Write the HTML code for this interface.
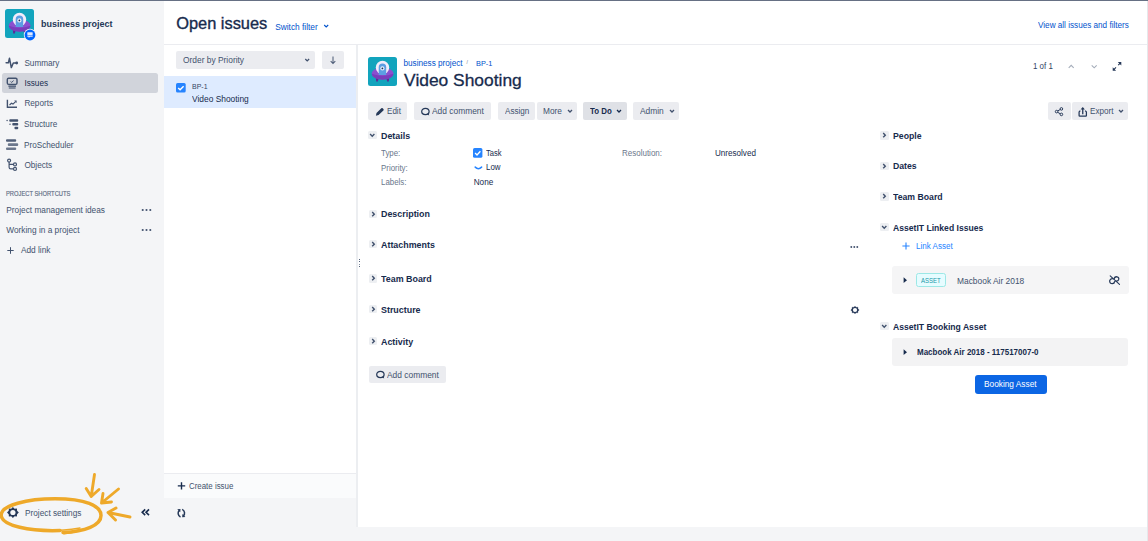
<!DOCTYPE html>
<html><head><meta charset="utf-8"><title>Open issues</title>
<style>
*{margin:0;padding:0;box-sizing:border-box}
html,body{width:1148px;height:541px;overflow:hidden;background:#f4f5f7;font-family:"Liberation Sans",sans-serif}
.t{position:absolute;white-space:nowrap;line-height:0}
.b{position:absolute}
.s{position:absolute;overflow:visible}
</style></head><body>
<div class="b" style="left:0.00px;top:0.00px;width:1148.00px;height:541.00px;background:#f4f5f7;"></div>
<div class="b" style="left:164.00px;top:1.00px;width:983.00px;height:526.00px;background:#ffffff;"></div>
<div class="b" style="left:0.00px;top:0.00px;width:1148.00px;height:1.00px;background:#667084;"></div>
<div class="b" style="left:1147.00px;top:1.00px;width:1.00px;height:540.00px;background:#e6e8eb;"></div>
<div class="b" style="left:164.00px;top:44.00px;width:983.00px;height:1.00px;background:#ebecf0;"></div>
<div class="b" style="left:356.00px;top:45.00px;width:1.70px;height:482.00px;background:#eceef1;"></div>
<svg class="s" style="left:5.00px;top:9.40px" width="29" height="29" viewBox="0 0 29 29">
<rect x="0" y="0" width="29" height="29" rx="2.5" fill="#12a4bd"/>
<path d="M7.8 20.5 L8.2 24.6 L9.9 24.6 L10.6 21 Z M18.4 21 L19.1 24.6 L20.8 24.6 L21.2 20.5 Z" fill="#5a2d98"/>
<ellipse cx="14.6" cy="16.6" rx="10.9" ry="6.0" fill="#8b4fcf"/>
<circle cx="14.5" cy="10.4" r="6.7" fill="#f2ecfb"/>
<path d="M10.7 18 L10.7 10.3 A3.75 3.75 0 0 1 18.2 10.3 L18.2 18 Z" fill="#5c9ee3"/>
<path d="M3.7 16.8 Q14.6 20.6 25.5 16.8 A10.9 6 0 0 1 3.7 16.8 Z" fill="#7a3dbb"/>
<circle cx="14.4" cy="11.4" r="2.1" fill="#e8f0fb"/>
<circle cx="14.4" cy="11.4" r="0.9" fill="#1c2d5a"/>
</svg>
<svg class="s" style="left:24.00px;top:29.40px" width="13" height="13" viewBox="0 0 13 13">
<circle cx="6" cy="6" r="6.2" fill="#f4f5f7"/>
<circle cx="6" cy="6" r="5.4" fill="#0065ff"/>
<rect x="3.3" y="3.3" width="5.4" height="2.6" rx="0.4" fill="#dfe9ff"/>
<path d="M3.3 6.6 H8.7 V7.7 H6.3 L4.6 8.8 V7.7 H3.3 Z" fill="#dfe9ff"/>
</svg>
<div class="t" style="left:41.00px;top:23.80px;font-size:9.72px;color:#253858;font-weight:bold;transform:scaleX(0.926);transform-origin:0 0;">business project</div>
<div class="b" style="left:2.00px;top:73.00px;width:156.00px;height:20.40px;background:#d1d4db;border-radius:2.5px;"></div>
<svg class="s" style="left:5.00px;top:56.00px" width="14" height="14" viewBox="0 0 14 14"><path d="M1.1 6.8 H3.4 L4.5 2.3 L6.3 11.6 L8.3 7 H11" fill="none" stroke="#42526e" stroke-width="1.5" stroke-linejoin="round" stroke-linecap="round"/><circle cx="11.7" cy="7" r="1.4" fill="#42526e"/></svg>
<svg class="s" style="left:5.00px;top:76.00px" width="14" height="14" viewBox="0 0 14 14"><rect x="2.3" y="2.2" width="9.7" height="6.2" rx="1.3" fill="none" stroke="#42526e" stroke-width="1.4"/><path d="M5.6 5.6 L6.7 6.4 L8.6 4.6" fill="none" stroke="#42526e" stroke-width="1"/><rect x="3.4" y="9.5" width="7.6" height="1.3" fill="#42526e"/><rect x="3.8" y="11.3" width="6.8" height="1.4" fill="#5e6c84"/></svg>
<svg class="s" style="left:5.00px;top:97.00px" width="14" height="14" viewBox="0 0 14 14"><path d="M2.4 2.8 V10.2 H12" fill="none" stroke="#42526e" stroke-width="1.4"/><path d="M4.5 8 L6.5 6.3 L8 7.1 L10.6 4.6" fill="none" stroke="#42526e" stroke-width="1.2"/><path d="M9.2 3.6 L11.6 3.6 L11.6 6 Z" fill="#42526e"/></svg>
<svg class="s" style="left:5.00px;top:117.00px" width="14" height="14" viewBox="0 0 14 14"><rect x="4.3" y="2.3" width="8.9" height="2.5" rx="0.8" fill="#42526e"/><rect x="7.3" y="6" width="5.9" height="2.5" rx="0.8" fill="#42526e"/><rect x="9.5" y="9.7" width="3.7" height="2.5" rx="0.8" fill="#42526e"/><circle cx="2.1" cy="3.5" r="0.7" fill="#42526e"/><circle cx="5" cy="7.2" r="0.7" fill="#42526e"/></svg>
<svg class="s" style="left:5.00px;top:138.00px" width="14" height="14" viewBox="0 0 14 14"><rect x="1" y="1.2" width="10.2" height="2.6" rx="1" fill="#505f79"/><rect x="2.8" y="5.3" width="10.4" height="2.7" rx="1" fill="#6b778c"/><rect x="1" y="9.5" width="10.2" height="2.6" rx="1" fill="#6b778c"/></svg>
<svg class="s" style="left:5.00px;top:158.00px" width="14" height="14" viewBox="0 0 14 14"><circle cx="4.1" cy="2.6" r="1.5" fill="none" stroke="#42526e" stroke-width="1.2"/><path d="M4.1 4.1 V9.2 Q4.1 10.9 5.8 10.9 H8.5 M4.1 6.4 H8.5" fill="none" stroke="#42526e" stroke-width="1.2"/><circle cx="10" cy="6.4" r="1.5" fill="none" stroke="#42526e" stroke-width="1.2"/><circle cx="10" cy="10.9" r="1.5" fill="none" stroke="#42526e" stroke-width="1.2"/></svg>
<div class="t" style="left:24.40px;top:63.63px;font-size:8.20px;color:#42526e;">Summary</div>
<div class="t" style="left:24.40px;top:83.63px;font-size:8.20px;color:#172b4d;">Issues</div>
<div class="t" style="left:24.40px;top:103.93px;font-size:8.20px;color:#42526e;">Reports</div>
<div class="t" style="left:24.40px;top:123.96px;font-size:8.69px;color:#42526e;transform:scaleX(0.943);transform-origin:0 0;">Structure</div>
<div class="t" style="left:24.40px;top:144.66px;font-size:8.69px;color:#42526e;transform:scaleX(0.943);transform-origin:0 0;">ProScheduler</div>
<div class="t" style="left:24.40px;top:166.03px;font-size:8.20px;color:#42526e;">Objects</div>
<div class="t" style="left:6.30px;top:194.26px;font-size:6.40px;color:#5e6c84;transform:scaleX(0.905);transform-origin:0 0;-webkit-text-stroke:0.15px #5e6c84;">PROJECT SHORTCUTS</div>
<div class="t" style="left:6.30px;top:209.69px;font-size:8.30px;color:#42526e;">Project management ideas</div>
<div class="t" style="left:6.30px;top:230.00px;font-size:8.30px;color:#42526e;">Working in a project</div>
<div class="t" style="left:20.90px;top:250.19px;font-size:8.30px;color:#42526e;">Add link</div>
<svg class="s" style="left:6.00px;top:246.00px" width="9" height="9" viewBox="0 0 9 9"><path d="M4.5 1.2 V7.8 M1.3 4.5 H7.7" stroke="#42526e" stroke-width="1"/></svg>
<svg class="s" style="left:141.00px;top:207.70px" width="12" height="4" viewBox="0 0 12 4"><circle cx="1.7" cy="2" r="1.05" fill="#42526e"/><circle cx="5.5" cy="2" r="1.05" fill="#42526e"/><circle cx="9.3" cy="2" r="1.05" fill="#42526e"/></svg>
<svg class="s" style="left:141.00px;top:228.30px" width="12" height="4" viewBox="0 0 12 4"><circle cx="1.7" cy="2" r="1.05" fill="#42526e"/><circle cx="5.5" cy="2" r="1.05" fill="#42526e"/><circle cx="9.3" cy="2" r="1.05" fill="#42526e"/></svg>
<svg class="s" style="left:6.00px;top:506.00px" width="14" height="14" viewBox="0 0 14 14"><path d="M6.9 0.8 L8.6 2.4 L10.9 2.2 L11.1 4.5 L12.8 6.2 L11.1 7.9 L10.9 10.2 L8.6 10 L6.9 11.6 L5.2 10 L2.9 10.2 L2.7 7.9 L1 6.2 L2.7 4.5 L2.9 2.2 L5.2 2.4 Z" transform="translate(0,0.3)" fill="#253858"/><circle cx="6.9" cy="6.5" r="2.6" fill="#f4f5f7"/></svg>
<div class="t" style="left:25.00px;top:513.38px;font-size:8.91px;color:#42526e;transform:scaleX(0.926);transform-origin:0 0;">Project settings</div>
<svg class="s" style="left:139.00px;top:506.00px" width="14" height="12" viewBox="0 0 14 12"><path d="M6.2 3.4 L3.2 6.3 L6.2 9.2 M10 3.4 L7 6.3 L10 9.2" fill="none" stroke="#172b4d" stroke-width="1.6"/></svg>
<div class="t" style="left:176.20px;top:23.46px;font-size:16.40px;color:#172b4d;-webkit-text-stroke:0.35px #172b4d;">Open issues</div>
<div class="t" style="left:275.20px;top:26.68px;font-size:8.33px;color:#0052cc;">Switch filter</div>
<svg class="s" style="left:322.00px;top:22.00px" width="8" height="8" viewBox="0 0 8 8"><path d="M2.2 3 L4.2 5 L6.2 3" fill="none" stroke="#0052cc" stroke-width="1.1"/></svg>
<div class="t" style="left:1038.00px;top:24.72px;font-size:8.81px;color:#0052cc;transform:scaleX(0.926);transform-origin:0 0;">View all issues and filters</div>
<div class="b" style="left:176.00px;top:51.00px;width:139.00px;height:17.70px;background:#ebecf0;border-radius:2px;"></div>
<div class="t" style="left:182.90px;top:60.31px;font-size:8.82px;color:#42526e;transform:scaleX(0.952);transform-origin:0 0;">Order by Priority</div>
<svg class="s" style="left:302.00px;top:55.00px" width="10" height="10" viewBox="0 0 10 10"><path d="M3.3 4 L5.2 5.9 L7.1 4" fill="none" stroke="#42526e" stroke-width="1.3"/></svg>
<div class="b" style="left:322.00px;top:51.00px;width:22.00px;height:17.70px;background:#ebecf0;border-radius:2px;"></div>
<svg class="s" style="left:328.00px;top:54.00px" width="10" height="12" viewBox="0 0 10 12"><path d="M5 2.5 V9.6 M2.7 7.2 L5 9.6 L7.3 7.2" fill="none" stroke="#505f79" stroke-width="1.05"/></svg>
<div class="b" style="left:164.00px;top:76.00px;width:192.00px;height:32.00px;background:#deebff;"></div>
<svg class="s" style="left:176.00px;top:82.80px" width="10" height="10" viewBox="0 0 10 10"><rect x="0" y="0" width="9.7" height="9.6" rx="1.6" fill="#2684ff"/><path d="M2.2 4.9 L4.1 6.8 L7.6 3.2" fill="none" stroke="#fff" stroke-width="1.4"/></svg>
<div class="t" style="left:192.00px;top:86.86px;font-size:7.84px;color:#344563;transform:scaleX(0.893);transform-origin:0 0;">BP-1</div>
<div class="t" style="left:192.00px;top:98.93px;font-size:9.07px;color:#172b4d;transform:scaleX(0.926);transform-origin:0 0;">Video Shooting</div>
<div class="b" style="left:164.00px;top:472.50px;width:192.00px;height:1.50px;background:#ebecf0;"></div>
<div class="b" style="left:164.00px;top:474.00px;width:192.00px;height:23.50px;background:#fafbfc;"></div>
<div class="b" style="left:164.00px;top:497.50px;width:192.00px;height:43.50px;background:#f4f5f7;"></div>
<svg class="s" style="left:177.00px;top:481.00px" width="9" height="9" viewBox="0 0 9 9"><path d="M4.5 1.2 V8.5 M0.8 4.85 H8.2" stroke="#172b4d" stroke-width="1.4"/></svg>
<div class="t" style="left:188.80px;top:486.20px;font-size:8.85px;color:#42526e;transform:scaleX(0.893);transform-origin:0 0;">Create issue</div>
<svg class="s" style="left:176.00px;top:508.00px" width="11" height="10" viewBox="0 0 11 10"><g transform="translate(-0.55,-0.45) scale(1.12)"><path d="M3.5 2.5 A3.6 3.6 0 0 0 4.5 8.4 M7 7.5 A3.6 3.6 0 0 0 6 1.6" fill="none" stroke="#253858" stroke-width="1.35"/><path d="M1.6 1.6 L4.5 1.3 L4.3 4.2 Z M8.9 8.4 L6 8.7 L6.2 5.8 Z" fill="#253858"/></g></svg>
<div class="b" style="left:358.90px;top:258.80px;width:1.00px;height:1.00px;background:#505f79;"></div>
<div class="b" style="left:358.90px;top:261.10px;width:1.00px;height:1.00px;background:#505f79;"></div>
<div class="b" style="left:358.90px;top:263.60px;width:1.00px;height:1.00px;background:#8993a4;"></div>
<div class="b" style="left:358.90px;top:266.00px;width:1.00px;height:1.00px;background:#505f79;"></div>
<svg class="s" style="left:368.00px;top:57.00px" width="29" height="29" viewBox="0 0 29 29">
<rect x="0" y="0" width="29" height="29" rx="2.5" fill="#12a4bd"/>
<path d="M7.8 20.5 L8.2 24.6 L9.9 24.6 L10.6 21 Z M18.4 21 L19.1 24.6 L20.8 24.6 L21.2 20.5 Z" fill="#5a2d98"/>
<ellipse cx="14.6" cy="16.6" rx="10.9" ry="6.0" fill="#8b4fcf"/>
<circle cx="14.5" cy="10.4" r="6.7" fill="#f2ecfb"/>
<path d="M10.7 18 L10.7 10.3 A3.75 3.75 0 0 1 18.2 10.3 L18.2 18 Z" fill="#5c9ee3"/>
<path d="M3.7 16.8 Q14.6 20.6 25.5 16.8 A10.9 6 0 0 1 3.7 16.8 Z" fill="#7a3dbb"/>
<circle cx="14.4" cy="11.4" r="2.1" fill="#e8f0fb"/>
<circle cx="14.4" cy="11.4" r="0.9" fill="#1c2d5a"/>
</svg>
<div class="t" style="left:403.50px;top:63.63px;font-size:8.19px;color:#0052cc;">business project</div>
<div class="t" style="left:466.60px;top:62.25px;font-size:5.00px;color:#6b778c;">/</div>
<div class="t" style="left:475.50px;top:63.70px;font-size:7.99px;color:#0052cc;transform:scaleX(0.926);transform-origin:0 0;">BP-1</div>
<div class="t" style="left:404.10px;top:79.71px;font-size:17.40px;color:#172b4d;-webkit-text-stroke:0.3px #172b4d;">Video Shooting</div>
<div class="b" style="left:368.40px;top:102.00px;width:38.60px;height:17.80px;background:#ebecf0;border-radius:2px;"></div>
<svg class="s" style="left:375.00px;top:107.00px" width="10" height="10" viewBox="0 0 10 10"><path d="M0.9 8.7 L1.5 6.1 L6.3 1.3 Q7 0.6 7.7 1.3 L8.4 2 Q9.1 2.7 8.4 3.4 L3.6 8.1 Z" fill="#253858"/></svg>
<div class="t" style="left:387.10px;top:110.98px;font-size:8.63px;color:#42526e;transform:scaleX(0.935);transform-origin:0 0;">Edit</div>
<div class="b" style="left:413.70px;top:102.00px;width:77.30px;height:17.80px;background:#ebecf0;border-radius:2px;"></div>
<svg class="s" style="left:419.50px;top:107.00px" width="11" height="10" viewBox="0 0 11 10"><ellipse cx="5.4" cy="4.5" rx="3.7" ry="3.2" fill="none" stroke="#253858" stroke-width="1.2"/><path d="M6.9 7.3 L9.2 8.6 L8.5 6.3 Z" fill="#253858"/></svg>
<div class="t" style="left:432.40px;top:110.94px;font-size:8.74px;color:#42526e;transform:scaleX(0.962);transform-origin:0 0;">Add comment</div>
<div class="b" style="left:497.70px;top:102.00px;width:37.30px;height:17.80px;background:#ebecf0;border-radius:2px;"></div>
<div class="t" style="left:504.60px;top:110.99px;font-size:8.59px;color:#42526e;transform:scaleX(0.943);transform-origin:0 0;">Assign</div>
<div class="b" style="left:537.00px;top:102.00px;width:40.00px;height:17.80px;background:#ebecf0;border-radius:2px;"></div>
<div class="t" style="left:543.00px;top:110.95px;font-size:8.72px;color:#42526e;transform:scaleX(0.952);transform-origin:0 0;">More</div>
<div class="b" style="left:583.40px;top:102.00px;width:43.60px;height:17.80px;background:#dfe1e6;border-radius:2px;"></div>
<div class="t" style="left:590.20px;top:111.07px;font-size:8.37px;color:#172b4d;font-weight:bold;transform:scaleX(0.943);transform-origin:0 0;">To Do</div>
<div class="b" style="left:633.00px;top:102.00px;width:46.00px;height:17.80px;background:#ebecf0;border-radius:2px;"></div>
<div class="t" style="left:639.90px;top:110.91px;font-size:8.82px;color:#42526e;transform:scaleX(0.952);transform-origin:0 0;">Admin</div>
<svg class="s" style="left:565.90px;top:107.00px" width="8" height="8" viewBox="0 0 8 8"><path d="M2 3 L4 5 L6 3" fill="none" stroke="#42526e" stroke-width="1.3"/></svg>
<svg class="s" style="left:615.00px;top:107.00px" width="8" height="8" viewBox="0 0 8 8"><path d="M2 3 L4 5 L6 3" fill="none" stroke="#172b4d" stroke-width="1.3"/></svg>
<svg class="s" style="left:668.00px;top:107.00px" width="8" height="8" viewBox="0 0 8 8"><path d="M2 3 L4 5 L6 3" fill="none" stroke="#42526e" stroke-width="1.3"/></svg>
<div class="b" style="left:368.10px;top:130.90px;width:8.50px;height:8.30px;background:#edeff2;border-radius:1.5px;"></div>
<svg class="s" style="left:368.10px;top:130.90px" width="8.5" height="8.3" viewBox="0 0 8.5 8.3"><path d="M2.1 3.1 L4.25 5.2 L6.4 3.1" fill="none" stroke="#42526e" stroke-width="1.4"/></svg>
<div class="t" style="left:380.70px;top:135.94px;font-size:9.60px;color:#172b4d;font-weight:bold;transform:scaleX(0.927);transform-origin:0 0;">Details</div>
<div class="t" style="left:380.70px;top:152.61px;font-size:8.53px;color:#6b778c;transform:scaleX(0.926);transform-origin:0 0;">Type:</div>
<div class="t" style="left:380.70px;top:167.77px;font-size:8.37px;color:#6b778c;transform:scaleX(0.943);transform-origin:0 0;">Priority:</div>
<div class="t" style="left:380.70px;top:182.31px;font-size:8.53px;color:#6b778c;transform:scaleX(0.926);transform-origin:0 0;">Labels:</div>
<svg class="s" style="left:473.40px;top:148.00px" width="10" height="10" viewBox="0 0 10 10"><rect x="0" y="0" width="9.4" height="9.8" rx="1.6" fill="#2684ff"/><path d="M2.1 5 L4 6.9 L7.4 3.3" fill="none" stroke="#fff" stroke-width="1.4"/></svg>
<div class="t" style="left:486.00px;top:152.67px;font-size:8.36px;color:#172b4d;transform:scaleX(0.909);transform-origin:0 0;">Task</div>
<svg class="s" style="left:474.00px;top:165.00px" width="9" height="6" viewBox="0 0 9 6"><path d="M1.2 2.1 Q4.4 5.3 7.6 2.1" fill="none" stroke="#2684ff" stroke-width="1.5" stroke-linecap="round"/></svg>
<div class="t" style="left:486.00px;top:168.02px;font-size:8.22px;color:#172b4d;transform:scaleX(0.962);transform-origin:0 0;">Low</div>
<div class="t" style="left:473.70px;top:182.93px;font-size:8.20px;color:#172b4d;">None</div>
<div class="t" style="left:622.00px;top:152.79px;font-size:8.32px;color:#6b778c;transform:scaleX(0.962);transform-origin:0 0;">Resolution:</div>
<div class="t" style="left:714.80px;top:152.75px;font-size:8.42px;color:#172b4d;transform:scaleX(0.962);transform-origin:0 0;">Unresolved</div>
<div class="b" style="left:368.50px;top:209.60px;width:8.50px;height:8.30px;background:#edeff2;border-radius:1.5px;"></div>
<svg class="s" style="left:368.50px;top:209.60px" width="8.5" height="8.3" viewBox="0 0 8.5 8.3"><path d="M3.2 2 L5.3 4.15 L3.2 6.3" fill="none" stroke="#42526e" stroke-width="1.4"/></svg>
<div class="t" style="left:380.70px;top:214.24px;font-size:9.60px;color:#172b4d;font-weight:bold;transform:scaleX(0.927);transform-origin:0 0;">Description</div>
<div class="b" style="left:368.50px;top:240.10px;width:8.50px;height:8.30px;background:#edeff2;border-radius:1.5px;"></div>
<svg class="s" style="left:368.50px;top:240.10px" width="8.5" height="8.3" viewBox="0 0 8.5 8.3"><path d="M3.2 2 L5.3 4.15 L3.2 6.3" fill="none" stroke="#42526e" stroke-width="1.4"/></svg>
<div class="t" style="left:380.70px;top:245.14px;font-size:9.60px;color:#172b4d;font-weight:bold;transform:scaleX(0.927);transform-origin:0 0;">Attachments</div>
<div class="b" style="left:368.50px;top:274.30px;width:8.50px;height:8.30px;background:#edeff2;border-radius:1.5px;"></div>
<svg class="s" style="left:368.50px;top:274.30px" width="8.5" height="8.3" viewBox="0 0 8.5 8.3"><path d="M3.2 2 L5.3 4.15 L3.2 6.3" fill="none" stroke="#42526e" stroke-width="1.4"/></svg>
<div class="t" style="left:380.70px;top:278.74px;font-size:9.60px;color:#172b4d;font-weight:bold;transform:scaleX(0.927);transform-origin:0 0;">Team Board</div>
<div class="b" style="left:368.50px;top:305.10px;width:8.50px;height:8.30px;background:#edeff2;border-radius:1.5px;"></div>
<svg class="s" style="left:368.50px;top:305.10px" width="8.5" height="8.3" viewBox="0 0 8.5 8.3"><path d="M3.2 2 L5.3 4.15 L3.2 6.3" fill="none" stroke="#42526e" stroke-width="1.4"/></svg>
<div class="t" style="left:380.70px;top:310.14px;font-size:9.60px;color:#172b4d;font-weight:bold;transform:scaleX(0.927);transform-origin:0 0;">Structure</div>
<div class="b" style="left:368.50px;top:336.80px;width:8.50px;height:8.30px;background:#edeff2;border-radius:1.5px;"></div>
<svg class="s" style="left:368.50px;top:336.80px" width="8.5" height="8.3" viewBox="0 0 8.5 8.3"><path d="M3.2 2 L5.3 4.15 L3.2 6.3" fill="none" stroke="#42526e" stroke-width="1.4"/></svg>
<div class="t" style="left:380.70px;top:341.84px;font-size:9.60px;color:#172b4d;font-weight:bold;transform:scaleX(0.927);transform-origin:0 0;">Activity</div>
<div class="b" style="left:368.50px;top:365.50px;width:77.80px;height:17.30px;background:#ebecf0;border-radius:2px;"></div>
<svg class="s" style="left:374.50px;top:369.50px" width="11" height="10" viewBox="0 0 11 10"><ellipse cx="5.4" cy="4.5" rx="3.7" ry="3.2" fill="none" stroke="#253858" stroke-width="1.2"/><path d="M6.9 7.3 L9.2 8.6 L8.5 6.3 Z" fill="#253858"/></svg>
<div class="t" style="left:386.90px;top:375.14px;font-size:8.74px;color:#42526e;transform:scaleX(0.962);transform-origin:0 0;">Add comment</div>
<div class="t" style="left:1033.40px;top:65.86px;font-size:8.70px;color:#344563;transform:scaleX(0.91);transform-origin:0 0;">1 of 1</div>
<svg class="s" style="left:1066.00px;top:62.00px" width="10" height="8" viewBox="0 0 10 8"><path d="M2.7 5.8 L5.2 3.3 L7.7 5.8" fill="none" stroke="#a5adba" stroke-width="1.1"/></svg>
<svg class="s" style="left:1089.00px;top:62.00px" width="10" height="8" viewBox="0 0 10 8"><path d="M2.7 3.3 L5.2 5.8 L7.7 3.3" fill="none" stroke="#a5adba" stroke-width="1.1"/></svg>
<svg class="s" style="left:1111.00px;top:61.00px" width="12" height="11" viewBox="0 0 12 11"><path d="M2.6 8.8 L5 6.4 M9.6 1.8 L7.2 4.2" stroke="#253858" stroke-width="1.1"/><path d="M1.7 6.3 V9.7 H5.1 Z M6.8 1 H10.3 V4.5 Z" fill="#253858"/></svg>
<div class="b" style="left:1048.30px;top:102.20px;width:22.60px;height:17.50px;background:#ebecf0;border-radius:2px;"></div>
<svg class="s" style="left:1054.00px;top:106.00px" width="10" height="11" viewBox="0 0 10 11"><circle cx="2.6" cy="5.6" r="1.3" fill="none" stroke="#253858" stroke-width="1"/><circle cx="7.4" cy="2.9" r="1.3" fill="none" stroke="#253858" stroke-width="1"/><circle cx="7.4" cy="8.4" r="1.3" fill="none" stroke="#253858" stroke-width="1"/><path d="M3.7 4.9 L6.3 3.5 M3.7 6.3 L6.3 7.8" stroke="#253858" stroke-width="1"/></svg>
<div class="b" style="left:1072.20px;top:102.20px;width:55.60px;height:17.50px;background:#ebecf0;border-radius:2px;"></div>
<svg class="s" style="left:1078.00px;top:106.00px" width="10" height="11" viewBox="0 0 10 11"><path d="M2.3 4.6 L1.1 5.9 V9.5 Q1.1 10.1 1.7 10.1 H7.8 Q8.4 10.1 8.4 9.5 V5.9 L7.2 4.6" fill="none" stroke="#253858" stroke-width="1.25" stroke-linejoin="round"/><path d="M4.75 8.3 V2.2" stroke="#253858" stroke-width="1.3"/><path d="M2.6 3.6 L4.75 1 L6.9 3.6 Z" fill="#253858"/></svg>
<div class="t" style="left:1089.70px;top:110.99px;font-size:8.59px;color:#42526e;transform:scaleX(0.943);transform-origin:0 0;">Export</div>
<svg class="s" style="left:1117.00px;top:107.00px" width="8" height="8" viewBox="0 0 8 8"><path d="M2 3 L4 5 L6 3" fill="none" stroke="#42526e" stroke-width="1.3"/></svg>
<div class="b" style="left:880.20px;top:131.40px;width:8.50px;height:8.30px;background:#edeff2;border-radius:1.5px;"></div>
<svg class="s" style="left:880.20px;top:131.40px" width="8.5" height="8.3" viewBox="0 0 8.5 8.3"><path d="M3.2 2 L5.3 4.15 L3.2 6.3" fill="none" stroke="#42526e" stroke-width="1.4"/></svg>
<div class="t" style="left:892.90px;top:135.64px;font-size:9.60px;color:#172b4d;font-weight:bold;transform:scaleX(0.906);transform-origin:0 0;">People</div>
<div class="b" style="left:880.20px;top:161.60px;width:8.50px;height:8.30px;background:#edeff2;border-radius:1.5px;"></div>
<svg class="s" style="left:880.20px;top:161.60px" width="8.5" height="8.3" viewBox="0 0 8.5 8.3"><path d="M3.2 2 L5.3 4.15 L3.2 6.3" fill="none" stroke="#42526e" stroke-width="1.4"/></svg>
<div class="t" style="left:892.90px;top:165.74px;font-size:9.60px;color:#172b4d;font-weight:bold;transform:scaleX(0.906);transform-origin:0 0;">Dates</div>
<div class="b" style="left:880.20px;top:192.40px;width:8.50px;height:8.30px;background:#edeff2;border-radius:1.5px;"></div>
<svg class="s" style="left:880.20px;top:192.40px" width="8.5" height="8.3" viewBox="0 0 8.5 8.3"><path d="M3.2 2 L5.3 4.15 L3.2 6.3" fill="none" stroke="#42526e" stroke-width="1.4"/></svg>
<div class="t" style="left:892.90px;top:196.64px;font-size:9.60px;color:#172b4d;font-weight:bold;transform:scaleX(0.906);transform-origin:0 0;">Team Board</div>
<div class="b" style="left:880.20px;top:223.00px;width:8.50px;height:8.30px;background:#edeff2;border-radius:1.5px;"></div>
<svg class="s" style="left:880.20px;top:223.00px" width="8.5" height="8.3" viewBox="0 0 8.5 8.3"><path d="M2.1 3.1 L4.25 5.2 L6.4 3.1" fill="none" stroke="#42526e" stroke-width="1.4"/></svg>
<div class="t" style="left:892.90px;top:227.84px;font-size:9.60px;color:#172b4d;font-weight:bold;transform:scaleX(0.896);transform-origin:0 0;">AssetIT Linked Issues</div>
<svg class="s" style="left:848.00px;top:244.00px" width="12" height="6" viewBox="0 0 12 6"><circle cx="3.3" cy="3" r="0.95" fill="#42526e"/><circle cx="6.3" cy="3" r="0.95" fill="#42526e"/><circle cx="9.3" cy="3" r="0.95" fill="#42526e"/></svg>
<svg class="s" style="left:901.00px;top:241.00px" width="10" height="10" viewBox="0 0 10 10"><path d="M5 1.4 V8.6 M1.4 5 H8.6" stroke="#2684ff" stroke-width="1.1"/></svg>
<div class="t" style="left:915.70px;top:246.44px;font-size:8.45px;color:#2684ff;transform:scaleX(0.952);transform-origin:0 0;">Link Asset</div>
<div class="b" style="left:891.70px;top:265.80px;width:237.50px;height:28.60px;background:#f5f5f6;border-radius:3px;"></div>
<svg class="s" style="left:902.00px;top:276.00px" width="6" height="8" viewBox="0 0 6 8"><path d="M1.6 1.3 L5 4.2 L1.6 7.1 Z" fill="#172b4d"/></svg>
<div class="b" style="left:916.20px;top:273.40px;width:29.80px;height:13.40px;background:#e6fcff;border:1px solid #9ce8e6;border-radius:2.5px;box-sizing:border-box;"></div>
<div class="t" style="left:921.30px;top:281.41px;font-size:7.40px;color:#1a9aa8;transform:scaleX(0.81);transform-origin:0 0;">ASSET</div>
<div class="t" style="left:956.60px;top:281.24px;font-size:8.74px;color:#42526e;transform:scaleX(0.962);transform-origin:0 0;">Macbook Air 2018</div>
<svg class="s" style="left:1107.50px;top:275.00px" width="13" height="11" viewBox="0 0 13 11"><path d="M4.6 3.6 Q2.2 3.4 1.7 5.6 Q1.4 8.6 4.4 8.7 Q6.4 8.6 6.6 6.6 M6.1 3.9 Q6.5 1.4 9 1.8 Q11.4 2.4 10.6 4.8 Q10 6.4 7.9 6.1" fill="none" stroke="#253858" stroke-width="1.25" stroke-linecap="round"/><path d="M2.2 0.9 L11.5 9.4" stroke="#253858" stroke-width="1.1" stroke-linecap="round"/></svg>
<svg class="s" style="left:849.50px;top:304.50px" width="10" height="10" viewBox="0 0 10 10"><path d="M5 0.8 L6.2 1.9 L7.9 1.8 L8 3.4 L9.2 4.6 L8 5.8 L7.9 7.4 L6.2 7.3 L5 8.4 L3.8 7.3 L2.1 7.4 L2 5.8 L0.8 4.6 L2 3.4 L2.1 1.8 L3.8 1.9 Z" transform="translate(0,0.4)" fill="#253858" stroke="#253858" stroke-width="0.3" stroke-linejoin="round"/><circle cx="5" cy="5" r="2.1" fill="#fff"/></svg>
<div class="b" style="left:880.40px;top:322.10px;width:8.50px;height:8.30px;background:#edeff2;border-radius:1.5px;"></div>
<svg class="s" style="left:880.40px;top:322.10px" width="8.5" height="8.3" viewBox="0 0 8.5 8.3"><path d="M2.1 3.1 L4.25 5.2 L6.4 3.1" fill="none" stroke="#42526e" stroke-width="1.4"/></svg>
<div class="t" style="left:893.00px;top:326.74px;font-size:9.60px;color:#172b4d;font-weight:bold;transform:scaleX(0.896);transform-origin:0 0;">AssetIT Booking Asset</div>
<div class="b" style="left:891.70px;top:338.40px;width:236.20px;height:27.30px;background:#f3f3f4;border-radius:3px;"></div>
<svg class="s" style="left:902.00px;top:348.00px" width="6" height="8" viewBox="0 0 6 8"><path d="M1.6 1.3 L5 4.2 L1.6 7.1 Z" fill="#172b4d"/></svg>
<div class="t" style="left:917.00px;top:352.42px;font-size:8.80px;color:#172b4d;font-weight:bold;transform:scaleX(0.909);transform-origin:0 0;">Macbook Air 2018 - 117517007-0</div>
<div class="b" style="left:974.60px;top:374.50px;width:72.00px;height:19.00px;background:#0c66e4;border-radius:3px;"></div>
<div class="t" style="left:984.40px;top:383.70px;font-size:9.13px;color:#ffffff;transform:scaleX(0.909);transform-origin:0 0;">Booking Asset</div>
<svg class="s" style="left:0.00px;top:470.00px" width="140" height="71" viewBox="0 0 140 71">
<path d="M60 60.5 C30 61.5 2 56 1.2 45.5 C0.5 35 28 28.8 55 28.8 C85 28.8 101 35.5 101 45.5 C101 55.5 85 61.5 63 62.5" fill="none" stroke="#eea92a" stroke-width="3.5" stroke-linecap="round"/>
<path d="M50 60.8 C62 60.6 72 59.2 80 58" fill="none" stroke="#eea92a" stroke-width="1.3" stroke-linecap="round"/><path d="M64 63.8 C70 63 76 61.8 80 60.5" fill="none" stroke="#eea92a" stroke-width="1.5" stroke-linecap="round"/>
<path d="M94.5 4.5 L91.2 26.5 M86.2 18.5 L91.2 26.5 L99 19.5" fill="none" stroke="#eea92a" stroke-width="2.9" stroke-linecap="round" stroke-linejoin="round"/>
<path d="M118.5 19 L101.5 33 M103 23.5 L101.5 33 L111.5 32" fill="none" stroke="#eea92a" stroke-width="2.9" stroke-linecap="round" stroke-linejoin="round"/>
<path d="M130 47 L108 42.5 M116 38 L108 42.5 L115.5 50" fill="none" stroke="#eea92a" stroke-width="2.9" stroke-linecap="round" stroke-linejoin="round"/>
</svg>
</body></html>
